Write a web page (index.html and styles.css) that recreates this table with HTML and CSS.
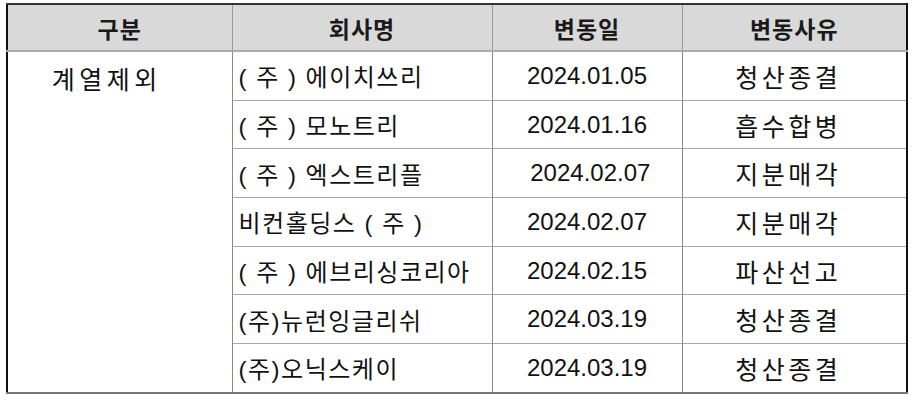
FILE: index.html
```html
<!DOCTYPE html>
<html lang="ko">
<head>
<meta charset="utf-8">
<link rel="stylesheet" href="styles.css">
</head>
<body>
<div class="wrap">
<table class="tbl">
  <colgroup>
    <col class="c1"><col class="c2"><col class="c3"><col class="c4">
  </colgroup>
  <thead>
    <tr>
      <th>구분</th>
      <th>회사명</th>
      <th>변동일</th>
      <th>변동사유</th>
    </tr>
  </thead>
  <tbody>
    <tr>
      <td class="cat" rowspan="7">계열제외</td>
      <td class="name">( 주 ) 에이치쓰리</td>
      <td class="date">2024.01.05</td>
      <td class="reason">청산종결</td>
    </tr>
    <tr>
      <td class="name">( 주 ) 모노트리</td>
      <td class="date">2024.01.16</td>
      <td class="reason">흡수합병</td>
    </tr>
    <tr>
      <td class="name">( 주 ) 엑스트리플</td>
      <td class="date">&nbsp;2024.02.07</td>
      <td class="reason">지분매각</td>
    </tr>
    <tr>
      <td class="name">비컨홀딩스 ( 주 )</td>
      <td class="date">2024.02.07</td>
      <td class="reason">지분매각</td>
    </tr>
    <tr>
      <td class="name">( 주 ) 에브리싱코리아</td>
      <td class="date">2024.02.15</td>
      <td class="reason">파산선고</td>
    </tr>
    <tr>
      <td class="name">(주)뉴런잉글리쉬</td>
      <td class="date">2024.03.19</td>
      <td class="reason">청산종결</td>
    </tr>
    <tr>
      <td class="name">(주)오닉스케이</td>
      <td class="date">2024.03.19</td>
      <td class="reason">청산종결</td>
    </tr>
  </tbody>
</table>
</div>
</body>
</html>
```

FILE: styles.css
```css
html, body {
  margin: 0;
  padding: 0;
  background: #ffffff;
}

.wrap {
  padding: 3px 0 0 6px;
}

.tbl {
  border-collapse: collapse;
  table-layout: fixed;
  width: 902px;
  font-family: "Liberation Sans", "Noto Sans CJK KR", sans-serif;
  color: #111;
  border-top: 2px solid #333;
  border-left: 2px solid #111;
  border-right: 2px solid #111;
  border-bottom: 2px solid #777;
}

.c1 { width: 225px; }
.c2 { width: 260px; }
.c3 { width: 190px; }
.c4 { width: 225px; }

.tbl th {
  background: #d9d9d9;
  height: 45px;
  padding: 0;
  font-size: 23px;
  font-weight: bold;
  letter-spacing: 1px;
  text-align: center;
  vertical-align: middle;
  border-left: 1px solid #9a9a9a;
  border-bottom: 2px solid #ababab;
  color: #1a1a1a;
}

.tbl td {
  height: 47.7px;
  padding: 0;
  font-size: 24px;
  vertical-align: middle;
  border-left: 1px solid #8a8a8a;
  border-top: 1px solid #a8a8a8;
  white-space: nowrap;
}

.tbl td.cat {
  vertical-align: top;
  text-align: center;
  padding: 8px 26px 0 0;
  font-size: 25px;
  letter-spacing: 4.5px;
  border-left: none;
}

.tbl th:first-child {
  border-left: none;
}

.tbl td.name {
  text-align: left;
  padding-left: 6px;
  letter-spacing: 1.5px;
}

.tbl td.date {
  text-align: center;
  font-size: 24px;
  letter-spacing: 0;
}

.tbl td.reason {
  text-align: center;
  font-size: 25px;
  letter-spacing: 3.5px;
  padding-right: 12px;
}
```
